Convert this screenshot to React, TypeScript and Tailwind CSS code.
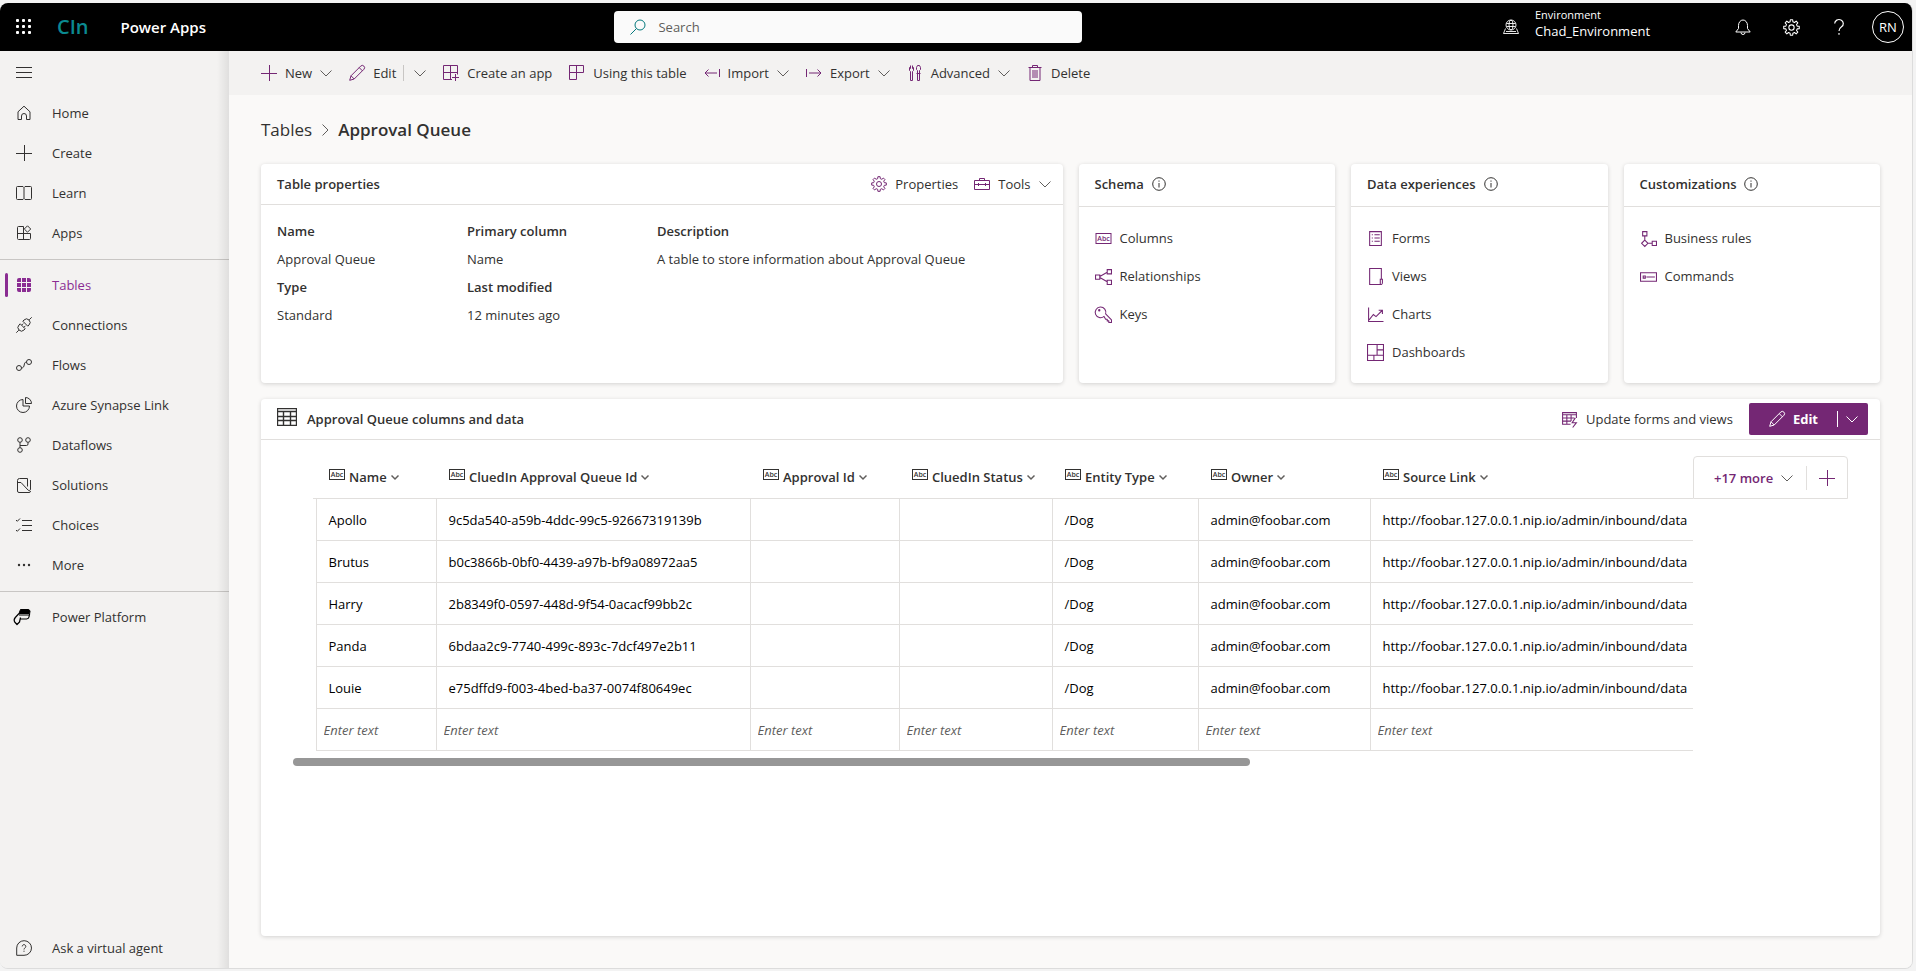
import { ReactNode } from "react";

const gearPath = (() => {
  const points: string[] = [];
  for (let i = 0; i < 8; i++) {
    const a = (i * Math.PI) / 4;
    [
      [-0.24, 5.5],
      [-0.15, 7.4],
      [0.15, 7.4],
      [0.24, 5.5],
    ].forEach(([d, r]) => points.push(`${(8 + r * Math.sin(a + d)).toFixed(2)} ${(8 - r * Math.cos(a + d)).toFixed(2)}`));
  }
  return "M" + points.join("L") + "Z";
})();

const shapes: Record<string, ReactNode> = {
  menu: <path d="M0 3.5h16M0 8.5h16M0 13.5h16" />,
  home: <path d="M2 6.8 8 1.2l6 5.6v7.7h-3.5V11a2.5 2.5 0 0 0-5 0v3.5H2z" strokeLinejoin="round" />,
  plus: <path d="M8.5 0v16M0 8.5h16" />,
  book: <path d="M8 2.5v11M1.5 1.5H7l1 1 1-1h5.5a1 1 0 0 1 1 1v11a1 1 0 0 1-1 1H9l-1-1-1 1H1.5a1 1 0 0 1-1-1v-11a1 1 0 0 1 1-1z" />,
  apps: (
    <>
      <path d="M7.5 1.5h-5a1 1 0 0 0-1 1v11a1 1 0 0 0 1 1h11a1 1 0 0 0 1-1v-5h-13M7.5 1.5v13" />
      <path d="M11.5.8 14.7 4l-3.2 3.2L8.3 4z" strokeLinejoin="round" />
    </>
  ),
  tables: (
    <g fill="currentColor" stroke="none">
      <path d="M3 1h2v4H1V3a2 2 0 0 1 2-2zM6 1h4v4H6zM11 1h2a2 2 0 0 1 2 2v2h-4zM1 6h4v4H1zM6 6h4v4H6zM11 6h4v4h-4zM1 11h4v4H3a2 2 0 0 1-2-2zM6 11h4v4H6zM11 11h4v2a2 2 0 0 1-2 2h-2z" />
    </g>
  ),
  plug: (
    <path
      d="M.3 15.7l2.5-2.5M13.2 2.8 15.7.3M4.2 6.8l5 5L8 13a3.5 3.5 0 0 1-5-5zM6.8 4.2l5 5L13 8a3.5 3.5 0 0 0-5-5zM5.6 8.2l1.6-1.6M7.8 10.4l1.6-1.6"
      strokeLinejoin="round"
    />
  ),
  flow: (
    <>
      <circle cx="3" cy="11" r="2.5" />
      <circle cx="13" cy="5" r="2.5" />
      <path d="M5.5 11c4 0 1.5-6 5-6" />
    </>
  ),
  pie: <path d="M7 2.5A6.5 6.5 0 1 0 13.5 9H7zM9.5.5v6h6a6 6 0 0 0-6-6z" strokeLinejoin="round" />,
  dataflow: (
    <>
      <circle cx="4" cy="3" r="2.3" />
      <circle cx="12" cy="3" r="2.3" />
      <circle cx="4" cy="13" r="2.3" />
      <path d="M4 5.3v5.4M12 5.3V7a1.5 1.5 0 0 1-1.5 1.5H4" />
    </>
  ),
  solutions: (
    <path
      d="M11.5 1.5h-8a2 2 0 0 0-2 2V14A1.5 1.5 0 0 0 3 15.5h10a1.5 1.5 0 0 0 1.5-1.5M1.5 5.5H5l7 7.500a1.400 1.400 0 0 0 2.500-1V3M11.500 1.500v8"
      strokeLinejoin="round"
    />
  ),
  choices: <path d="M6 3.5h10M6 8.5h10M6 13.5h10M0 3l1.3 1.3L4 1.5M0 13l1.3 1.3L4 11.5" />,
  more: (
    <g fill="currentColor" stroke="none">
      <circle cx="3" cy="8" r="1.2" />
      <circle cx="8" cy="8" r="1.2" />
      <circle cx="13" cy="8" r="1.2" />
    </g>
  ),
  platform: (
    <g stroke="#000" strokeLinejoin="round">
      <path d="M4.5.5H12a2 2 0 0 1 1.9 2.7l-.3 1.3H3z" fill="#000" />
      <path d="M3 6h10.3M13.7 4.5 13 8a2.5 2.5 0 0 1-2.4 2H4.5M3 4.5-.7 8.5c-1.3 1.5-1.3 3.3-.6 4.5L1 15.5 3.5 13l1-4.5" strokeWidth="1.2" />
    </g>
  ),
  agent: (
    <>
      <path d="M.7 15.3V8A7.4 7.3 0 1 1 8 15.3z" strokeLinejoin="round" />
      <path d="M6.2 6.4a1.8 1.8 0 1 1 2.7 1.6c-.6.4-.9.7-.9 1.5M8 10.7v1.1" />
    </>
  ),
  search: (
    <>
      <circle cx="10" cy="6" r="5" />
      <path d="M6.5 9.5.5 15.5" />
    </>
  ),
  globe: (
    <g strokeWidth=".9">
      <circle cx="8" cy="6" r="5" />
      <ellipse cx="8" cy="6" rx="2" ry="5" />
      <path d="M3.5 4.5h9M3.5 7.5h9M2.5 9.5l-2 5h15l-2-5M3 12.5h10" />
    </g>
  ),
  bell: <path d="M3.5 9.5v-3a4.500 5.500 0 0 1 9 0v3L15.2 13H.8zM6 13.500a2 2 0 0 0 4 0" strokeLinejoin="round" />,
  gear: (
    <>
      <path d={gearPath} strokeLinejoin="round" />
      <circle cx="8" cy="8" r="2.5" />
    </>
  ),
  help: <path d="M3.7 4.5a4.3 4 0 1 1 6.8 3.3C8.8 9 8 9.7 8 12M8 14v1.8" strokeWidth="1.2" />,
  pencil: <path d="M.7 15.3 2 10.8 11.7 1.1a2.1 2.1 0 0 1 3.2 3.2L5.2 14zM2 10.8 5.2 14M10.2 2.6l3.2 3.2" strokeLinejoin="round" />,
  createApp: <path d="M9 14.5H.5V.5h14v9M.5 7.5h14M7.5.5v14M12.5 9v7M9 12.5h7" />,
  usingTable: <path d="M.5.5h14v7H.5zM.5.5v14h7V.5" />,
  import: <path d="M15.5 4v8M13 8H1M4.5 4.5 1 8l3.5 3.5" />,
  export: <path d="M.5 4v8M3 8h12M11.5 4.5 15 8l-3.5 3.5" />,
  advanced: <path d="M5.500.5v3l1-1v3l-1 1v9h-2v-9l-1-1v-3l1 1v-3M10.500.5h2l1 2v2l-1 1v3h-2v-3l-1-1v-2zM9.500 8.500h4M10.500 8.500v7h2v-7" />,
  trash: <path d="M1.5 2.5h13M5.5 2.5v-2h5v2M3 2.5v13h10v-13M6 5v8M8 5v8M10 5v8" />,
  toolbox: <path d="M.5 4.5h15v9H.5zM5.5 4.5v-2h5v2M.5 8.5h15M4.5 7v3M11.5 7v3" />,
  info: (
    <>
      <circle cx="8" cy="8" r="6.3" />
      <path d="M8 7v4.5M8 4.5v1.2" />
    </>
  ),
  relationships: <path d="M.5 6.5h4v4h-4zM11.5 1.5h4v4h-4zM11.5 11.5h4v4h-4zM4.5 8l7-4M4.5 9l7 4" />,
  key: (
    <>
      <path d="M8.5 9.8A5 5 0 1 1 10 7.500l5.500 5.500v2.500H13V14h-1.500v-1.500H10z" strokeLinejoin="round" />
      <circle cx="4" cy="4" r=".6" />
    </>
  ),
  forms: <path d="M2.5 1.5h11v13h-11zM4.5 4.5h1M7 4.5h5M4.5 7.5h1M7 7.5h5M4.5 10.5h1M7 10.5h5" />,
  views: <path d="M13.5 10V.5h-11v15h11a1.500 1.500 0 0 0 1-1.500v-3.500h-2v5" />,
  charts: <path d="M1.5 1.5v13h14M2 13l4-5 2.500 2L14.500 4M11 4h3.500v3.500" />,
  dashboards: <path d="M.5.5h15v15H.5zM9.5.5v10M.5 10.5h15M9.5 5.5h6M6.5 10.5v5" />,
  rules: <path d="M2.5 1.5h4v4h-4zM4.5 5.5v4M4.5 9.5l3 3-3 3-3-3zM7.5 12.5h4M11.5 10.5h4v4h-4z" />,
  commands: <path d="M.5 4.5h15v8H.5zM3 7.5h2v2H3zM6 8.5h8" />,
  updateForms: <path d="M9 12.5H1.5v-11h13v5M1.5 3.5h13M1.5 6.5h11M1.5 9.5h8M5.5 3.5v9M9.5 3.5v6M13.5 6.5l-3 4.500h4L11 15.500" />,
};

function Icon({ name, className = "size-4" }: { name: string; className?: string }) {
  return (
    <svg viewBox="0 0 16 16" fill="none" stroke="currentColor" className={`shrink-0 overflow-visible ${className}`} aria-hidden="true">
      {shapes[name]}
    </svg>
  );
}

function Chevron({ className = "text-[#605e5c]" }: { className?: string }) {
  return (
    <svg viewBox="0 0 12 12" fill="none" stroke="currentColor" className={`size-3 shrink-0 ${className}`} aria-hidden="true">
      <path d="M.5 3.5 6 9l5.5-5.5" />
    </svg>
  );
}

function AbcIcon({ className }: { className: string }) {
  return (
    <svg viewBox="0 0 16 11" className={`h-[11px] shrink-0 ${className}`} aria-hidden="true">
      <rect x=".5" y=".5" width="15" height="10" fill="none" stroke="currentColor" />
      <text x="8" y="8" textAnchor="middle" fontSize="7" fontWeight="600" fill="currentColor">
        Abc
      </text>
    </svg>
  );
}

const navGroups = [
  [
    { icon: "home", label: "Home" },
    { icon: "plus", label: "Create" },
    { icon: "book", label: "Learn" },
    { icon: "apps", label: "Apps" },
  ],
  [
    { icon: "tables", label: "Tables", active: true },
    { icon: "plug", label: "Connections" },
    { icon: "flow", label: "Flows" },
    { icon: "pie", label: "Azure Synapse Link" },
    { icon: "dataflow", label: "Dataflows" },
    { icon: "solutions", label: "Solutions" },
    { icon: "choices", label: "Choices" },
    { icon: "more", label: "More" },
  ],
  [{ icon: "platform", label: "Power Platform" }],
];

const commands = [
  { icon: "plus", label: "New", menu: true },
  { icon: "pencil", label: "Edit", split: true },
  { icon: "createApp", label: "Create an app" },
  { icon: "usingTable", label: "Using this table" },
  { icon: "import", label: "Import", menu: true },
  { icon: "export", label: "Export", menu: true },
  { icon: "advanced", label: "Advanced", menu: true },
  { icon: "trash", label: "Delete" },
];

const linkCards = [
  {
    title: "Schema",
    links: [
      { icon: "abc", label: "Columns" },
      { icon: "relationships", label: "Relationships" },
      { icon: "key", label: "Keys" },
    ],
  },
  {
    title: "Data experiences",
    links: [
      { icon: "forms", label: "Forms" },
      { icon: "views", label: "Views" },
      { icon: "charts", label: "Charts" },
      { icon: "dashboards", label: "Dashboards" },
    ],
  },
  {
    title: "Customizations",
    links: [
      { icon: "rules", label: "Business rules" },
      { icon: "commands", label: "Commands" },
    ],
  },
];

const columns = [
  { label: "Name", width: "w-[120px]" },
  { label: "CluedIn Approval Queue Id", width: "w-[314px]" },
  { label: "Approval Id", width: "w-[149px]" },
  { label: "CluedIn Status", width: "w-[153px]" },
  { label: "Entity Type", width: "w-[146px]" },
  { label: "Owner", width: "w-[172px]" },
  { label: "Source Link", width: "" },
];

const link = "http://foobar.127.0.0.1.nip.io/admin/inbound/data";
const rows = [
  ["Apollo", "9c5da540-a59b-4ddc-99c5-92667319139b"],
  ["Brutus", "b0c3866b-0bf0-4439-a97b-bf9a08972aa5"],
  ["Harry", "2b8349f0-0597-448d-9f54-0acacf99bb2c"],
  ["Panda", "6bdaa2c9-7740-499c-893c-7dcf497e2b11"],
  ["Louie", "e75dffd9-f003-4bed-ba37-0074f80649ec"],
].map(([name, id]) => [name, id, "", "", "/Dog", "admin@foobar.com", link]);

function Header() {
  return (
    <header className="grid h-12 grid-cols-[20fr_468px_27fr] items-center bg-black text-white">
      <div className="flex items-center pl-4">
        <button aria-label="App launcher">
          <svg viewBox="0 0 16 16" fill="currentColor" className="size-4">
            {[0, 6, 12].map((y) => [0, 6, 12].map((x) => <rect key={`${x}-${y}`} x={x} y={y} width="3" height="3" rx="1" />))}
          </svg>
        </button>
        <span className="ml-[25px] text-xl font-semibold text-[#0b8a91]">CIn</span>
        <a href="#" className="ml-8 text-[15px] font-semibold">
          Power Apps
        </a>
      </div>
      <div className="flex h-8 items-center gap-3 rounded-sm bg-[#fafafa] px-4 text-[#03787c]">
        <Icon name="search" />
        <input type="search" aria-label="Search" placeholder="Search" className="min-w-0 flex-1 bg-transparent outline-none placeholder:text-[#605e5c]" />
      </div>
      <div className="flex items-center justify-end pr-2">
        <button className="flex w-[232px] items-center gap-4 text-left">
          <Icon name="globe" />
          <span className="pb-2">
            <span className="block text-[11px] leading-4">Environment</span>
            <span className="block leading-4">Chad_Environment</span>
          </span>
        </button>
        <button aria-label="Notifications" className="flex w-12 justify-start">
          <Icon name="bell" />
        </button>
        <button aria-label="Settings" className="flex w-12 justify-start">
          <Icon name="gear" className="size-[17px]" />
        </button>
        <button aria-label="Help" className="flex w-[41px] justify-start">
          <Icon name="help" />
        </button>
        <button className="size-8 rounded-full border border-white text-center">RN</button>
      </div>
    </header>
  );
}

function NavItem({ icon, label, active }: { icon: string; label: string; active?: boolean }) {
  return (
    <a href="#" className={`flex h-10 items-center ${active ? "text-[#8a2c92]" : "text-[#323130]"}`}>
      <span className={`ml-[5px] h-6 w-[3px] rounded-full ${active ? "bg-[#8a2c92]" : ""}`} />
      <Icon name={icon} className="ml-2 size-4" />
      <span className="ml-5">{label}</span>
    </a>
  );
}

function Sidebar() {
  return (
    <nav className="relative flex w-[229px] shrink-0 flex-col bg-[#f3f2f1]">
      <button aria-label="Collapse navigation" className="flex h-[42px] items-center pl-4">
        <Icon name="menu" />
      </button>
      {navGroups.map((group, i) => (
        <div key={i}>
          {i > 0 && (
            <div className="flex h-3 items-center">
              <hr className="flex-1 border-[#c8c6c4]" />
            </div>
          )}
          {group.map((item) => (
            <NavItem key={item.label} {...item} />
          ))}
        </div>
      ))}
      <div className="mt-auto">
        <NavItem icon="agent" label="Ask a virtual agent" />
      </div>
      <div className="pointer-events-none absolute inset-y-0 right-0 w-3 bg-linear-to-r from-transparent to-black/8" />
    </nav>
  );
}

function CommandBar() {
  return (
    <div className="flex h-11 items-center gap-[17px] bg-[#f3f2f1] px-8">
      {commands.map(({ icon, label, menu, split }) => (
        <div key={label} className="flex items-center">
          <button className="flex items-center gap-2">
            <Icon name={icon} className="size-4 text-[#742774]" />
            <span>{label}</span>
            {menu && <Chevron />}
          </button>
          {split && (
            <button aria-label="More edit options" className="ml-[7px] flex h-4 items-center border-l border-[#c8c6c4] pl-2.5">
              <Chevron />
            </button>
          )}
        </div>
      ))}
    </div>
  );
}

function Property({ label, value }: { label: string; value: string }) {
  return (
    <div>
      <dt className="font-semibold">{label}</dt>
      <dd>{value}</dd>
    </div>
  );
}

const card = "rounded-sm bg-white shadow-[0_1px_4px_rgba(0,0,0,0.16)]";

function TableProperties() {
  return (
    <section className={card}>
      <div className="flex h-[41px] items-center border-b border-[#e1dfdd] pr-3 pl-4">
        <h2 className="flex-1 font-semibold">Table properties</h2>
        <button className="flex items-center gap-2">
          <Icon name="gear" className="size-4 text-[#742774]" />
          Properties
        </button>
        <button className="ml-4 flex items-center gap-2">
          <Icon name="toolbox" className="size-4 text-[#742774]" />
          Tools
          <Chevron />
        </button>
      </div>
      <dl className="grid grid-cols-[190px_190px_1fr] px-4 pt-3 leading-7">
        <Property label="Name" value="Approval Queue" />
        <Property label="Primary column" value="Name" />
        <Property label="Description" value="A table to store information about Approval Queue" />
        <Property label="Type" value="Standard" />
        <Property label="Last modified" value="12 minutes ago" />
      </dl>
    </section>
  );
}

function DataGrid() {
  return (
    <table className="w-full table-fixed text-left">
      <thead>
        <tr className="h-[42px]">
          <td className="w-[3px] border-b border-[#e1dfdd]" />
          {columns.map(({ label, width }) => (
            <th key={label} scope="col" className={`border-b border-[#e1dfdd] p-0 pl-[13px] font-semibold ${width}`}>
              <button className="flex items-center gap-1 whitespace-nowrap">
                <AbcIcon className="mb-1 w-4 text-[#323130]" />
                {label}
                <svg viewBox="0 0 8 8" fill="none" stroke="#605e5c" strokeWidth="1.5" className="size-2" aria-hidden="true">
                  <path d="M.5 2.5 4 6l3.500-3.500" />
                </svg>
              </button>
            </th>
          ))}
        </tr>
      </thead>
      <tbody>
        {rows.map((row) => (
          <tr key={row[0]} className="h-[42px] text-black">
            <td />
            {row.map((cell, i) => (
              <td key={i} className="overflow-hidden border-b border-l border-[#e1dfdd] p-0 pt-0.5 pl-3 whitespace-nowrap">
                {cell}
              </td>
            ))}
          </tr>
        ))}
        <tr className="h-[42px]">
          <td />
          {columns.map(({ label }) => (
            <td key={label} className="border-b border-l border-[#e1dfdd] p-0 pt-0.5 pl-[7px]">
              <input aria-label={label} placeholder="Enter text" className="w-full bg-transparent italic outline-none placeholder:text-[#605e5c]" />
            </td>
          ))}
        </tr>
      </tbody>
    </table>
  );
}

export default function App() {
  return (
    <div className="flex min-h-screen flex-col bg-[#f3f3f3] pt-[3px] pr-[3px] pb-[2px] font-['Open_Sans','Noto_Sans',sans-serif] text-[13px] leading-5 text-[#323130]">
      <div className="flex flex-1 flex-col overflow-hidden rounded-lg border-r border-b border-[#dcdcdc]">
        <Header />
        <div className="flex flex-1">
          <Sidebar />
          <main className="flex min-w-0 flex-1 flex-col bg-[#faf9f8]">
            <CommandBar />
            <div className="flex flex-1 flex-col px-8 pb-8">
              <nav aria-label="Breadcrumb" className="flex h-[69px] items-center gap-[7px] text-[17px]">
                <a href="#">Tables</a>
                <Chevron className="-rotate-90 text-[#605e5c]" />
                <h1 className="font-semibold">Approval Queue</h1>
              </nav>
              <div className="grid grid-cols-[25fr_8fr_8fr_8fr] gap-4">
                <TableProperties />
                {linkCards.map(({ title, links }) => (
                  <section key={title} className={card}>
                    <div className="flex h-[43px] items-center gap-[7px] border-b border-[#e1dfdd] px-4 pb-0.5">
                      <h2 className="font-semibold">{title}</h2>
                      <Icon name="info" />
                    </div>
                    <ul className="px-4 py-3">
                      {links.map(({ icon, label }) => (
                        <li key={label}>
                          <a href="#" className="flex h-[38px] items-center gap-2">
                            {icon === "abc" ? <AbcIcon className="w-[17px] text-[#742774]" /> : <Icon name={icon} className="size-[17px] text-[#742774]" />}
                            {label}
                          </a>
                        </li>
                      ))}
                    </ul>
                  </section>
                ))}
              </div>

              <section className={`mt-4 flex-1 ${card}`}>
                <div className="flex h-[41px] items-center border-b border-[#e1dfdd] pr-3 pl-4">
                  <svg viewBox="0 0 20 18" fill="none" stroke="#323130" className="mr-[10px] mb-1 h-[18px] w-5" aria-hidden="true">
                    <path d="M.5.5h19v17H.5zM.5 3.5h19M.5 8.5h19M.5 12.5h19M6.5 3.5v14M13.5 3.5v14" strokeWidth="1.4" />
                  </svg>
                  <h2 className="flex-1 font-semibold">Approval Queue columns and data</h2>
                  <button className="mr-4 flex items-center gap-2">
                    <Icon name="updateForms" className="size-[17px] text-[#742774]" />
                    Update forms and views
                  </button>
                  <div className="flex h-8 items-center rounded-xs bg-[#742774] text-white">
                    <button className="flex h-8 items-center gap-2 pr-[19px] pl-5 font-bold">
                      <Icon name="pencil" />
                      Edit
                    </button>
                    <button aria-label="More edit options" className="flex h-4 w-[31px] items-center border-l border-white pl-2">
                      <Chevron className="text-white" />
                    </button>
                  </div>
                </div>
                <div className="px-8 pt-4">
                  <div className="flex items-start">
                    <div className="min-w-0 flex-1 overflow-hidden pl-5">
                      <DataGrid />
                    </div>
                    <div className="flex h-[43px] w-[155px] items-center rounded-t border border-[#e1dfdd]">
                      <button className="flex items-center gap-2 pl-5 font-semibold whitespace-nowrap text-[#742774]">
                        +17 more
                        <Chevron />
                      </button>
                      <button aria-label="New column" className="ml-auto flex h-6 items-center border-l border-[#e1dfdd] px-3 text-[#742774]">
                        <Icon name="plus" />
                      </button>
                    </div>
                  </div>
                  <div className="mt-[7px] h-2 w-8/13 rounded-full bg-[#979797]" />
                </div>
              </section>
            </div>
          </main>
        </div>
      </div>
    </div>
  );
}
